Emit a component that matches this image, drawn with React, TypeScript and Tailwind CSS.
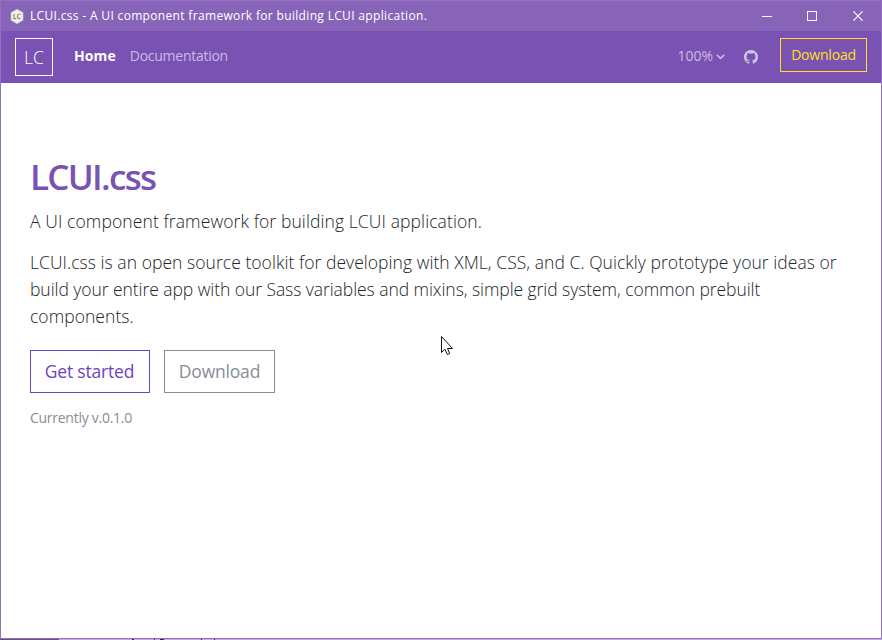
import React from "react";

function AppIcon() {
  return (
    <svg width="14" height="15" viewBox="0 0 14 15" className="shrink-0">
      <path d="M7 0.3 13 3.6V11.2L7 14.7 1 11.2V3.6Z" fill="#eef0e8" stroke="#c9c7b4" strokeWidth="0.8" />
      <path d="M4 5V9.6H6.2M10.4 5.6C8.6 4.4 7.4 5.6 7.4 7.3S8.6 10.2 10.4 9.2" fill="none" stroke="#8b8580" strokeWidth="1.1" />
    </svg>
  );
}

function TitleBar() {
  return (
    <header className="flex h-[30px] shrink-0 items-center bg-[#8764b8] pl-[9px] text-white">
      <AppIcon />
      <span className="ml-[6px] text-[12px] leading-[18px] font-normal tracking-[0.33px] whitespace-nowrap">
        LCUI.css - A UI component framework for building LCUI application.
      </span>
      <div className="ml-auto flex">
        <span className="flex h-[30px] w-[45px] items-center justify-center">
          <svg width="10" height="10" shapeRendering="crispEdges"><path d="M0 5.5H10" stroke="#fff" /></svg>
        </span>
        <span className="flex h-[30px] w-[45px] items-center justify-center">
          <svg width="10" height="10" shapeRendering="crispEdges"><path d="M.5 .5H9.5V9.5H.5Z" fill="none" stroke="#fff" /></svg>
        </span>
        <span className="flex h-[30px] w-[47px] items-center justify-center pl-px">
          <svg width="10" height="10"><path d="M.4 .4 9.6 9.6M9.6 .4 .4 9.6" stroke="#fff" strokeWidth="1.2" /></svg>
        </span>
      </div>
    </header>
  );
}

function NavBar() {
  return (
    <nav className="flex h-[52px] shrink-0 items-center bg-[#7952b3] pr-[14px] pl-[14px] text-[14px] leading-[21px] text-[#cbbbe1]">
      <a className="flex h-[38px] w-[38px] items-center justify-center border border-white text-[17.5px] font-light text-white">LC</a>
      <a className="mb-[4px] ml-[21px] font-bold tracking-[0.1px] text-white">Home</a>
      <a className="mb-[4px] ml-[14px] tracking-[-0.27px]">Documentation</a>
      <div className="ml-auto flex items-center">
        <span className="mb-[4px]">100%</span>
        <svg width="9" height="6" viewBox="0 0 9 6" className="ml-[3px]">
          <path d="M.8 .9 4.5 4.4 8.2 .9" fill="none" stroke="#cbbbe1" strokeWidth="1.5" />
        </svg>
        <svg width="14" height="14" viewBox="0 0 16 16" className="ml-[19px]" fill="#d2c7e0">
          <path d="M8 0C3.58 0 0 3.58 0 8c0 3.54 2.29 6.53 5.47 7.59.4.07.55-.17.55-.38 0-.19-.01-.82-.01-1.49-2.01.37-2.53-.49-2.69-.94-.09-.23-.48-.94-.82-1.13-.28-.15-.68-.52-.01-.53.63-.01 1.08.58 1.23.82.72 1.21 1.87.87 2.33.66.07-.52.28-.87.51-1.07-1.78-.2-3.64-.89-3.64-3.95 0-.87.31-1.59.82-2.15-.08-.2-.36-1.02.08-2.12 0 0 .67-.21 2.2.82.64-.18 1.32-.27 2-.27s1.36.09 2 .27c1.53-1.04 2.2-.82 2.2-.82.44 1.1.16 1.92.08 2.12.51.56.82 1.27.82 2.15 0 3.07-1.87 3.75-3.65 3.95.29.25.54.73.54 1.48 0 1.07-.01 1.93-.01 2.2 0 .21.15.46.55.38A8.01 8.01 0 0 0 16 8c0-4.42-3.58-8-8-8Z" />
        </svg>
        <button className="mb-[4px] ml-[22px] flex h-[34px] w-[87px] items-center justify-center border border-[#ffe11a] pb-px tracking-[-0.2px] text-[#ffe11a]">Download</button>
      </div>
    </nav>
  );
}

export default function App() {
  return (
    <div className="relative flex h-[640px] w-[882px] flex-col overflow-hidden bg-[#c3afd9] font-['Open_Sans','Noto_Sans',sans-serif]">
      <div className="flex h-[639px] flex-col border border-[#9370c1] bg-white">
        <TitleBar />
        <NavBar />
        <main className="px-[29px] pt-[73px] text-[#212529]">
          <h1 className="text-[35px] leading-[42px] font-semibold tracking-[-1.7px] text-[#7952b3]">LCUI.css</h1>
          <p className="mt-[10px] text-[17.5px] leading-[27px] font-light whitespace-nowrap">
            <span className="tracking-[0.1px]">A UI component framework for building LCUI application.</span>
          </p>
          <p className="mt-[14px] text-[17.5px] leading-[27px] font-light whitespace-nowrap">
            <span className="tracking-[0.045px]">LCUI.css is an open source toolkit for developing with XML, CSS, and C. Quickly prototype your ideas or</span><br />
            <span className="tracking-[-0.06px]">build your entire app with our Sass variables and mixins, simple grid system, common prebuilt</span><br />
            <span className="tracking-[0.05px]">components.</span>
          </p>
          <div className="mt-[20px] flex gap-[14px] text-[17.5px] tracking-[-0.2px]">
            <button className="h-[43px] w-[120px] border border-[#6f42c1] pr-px text-[#6f42c1]">Get started</button>
            <button className="h-[43px] w-[111px] border border-[#868e8e] text-[#868e96]">Download</button>
          </div>
          <p className="mt-[14px] text-[14px] leading-[21px] tracking-[-0.27px] text-[#868e96]">Currently v.0.1.0</p>
        </main>
      </div>
      <div className="flex h-px">
        <i className="w-[59px] bg-[#625174]" />
        <i className="ml-[73px] w-[2px] bg-[#33283d]" />
        <i className="ml-[20px] w-px bg-[#33283d]" />
        <i className="ml-[5px] w-[4px] bg-[#33283d]" />
        <i className="ml-[37px] w-px bg-[#33283d]" />
        <i className="ml-[12px] w-px bg-[#33283d]" />
      </div>
      <svg className="absolute top-[335px] left-[440px]" width="14" height="22" viewBox="0 0 14 22">
        <path d="M1.5 1.5V17.5L5 14.2 7.3 19.5 9.7 18.5 7.5 13.5H12.5Z" fill="#fff" stroke="#111" strokeWidth="1" />
      </svg>
    </div>
  );
}
